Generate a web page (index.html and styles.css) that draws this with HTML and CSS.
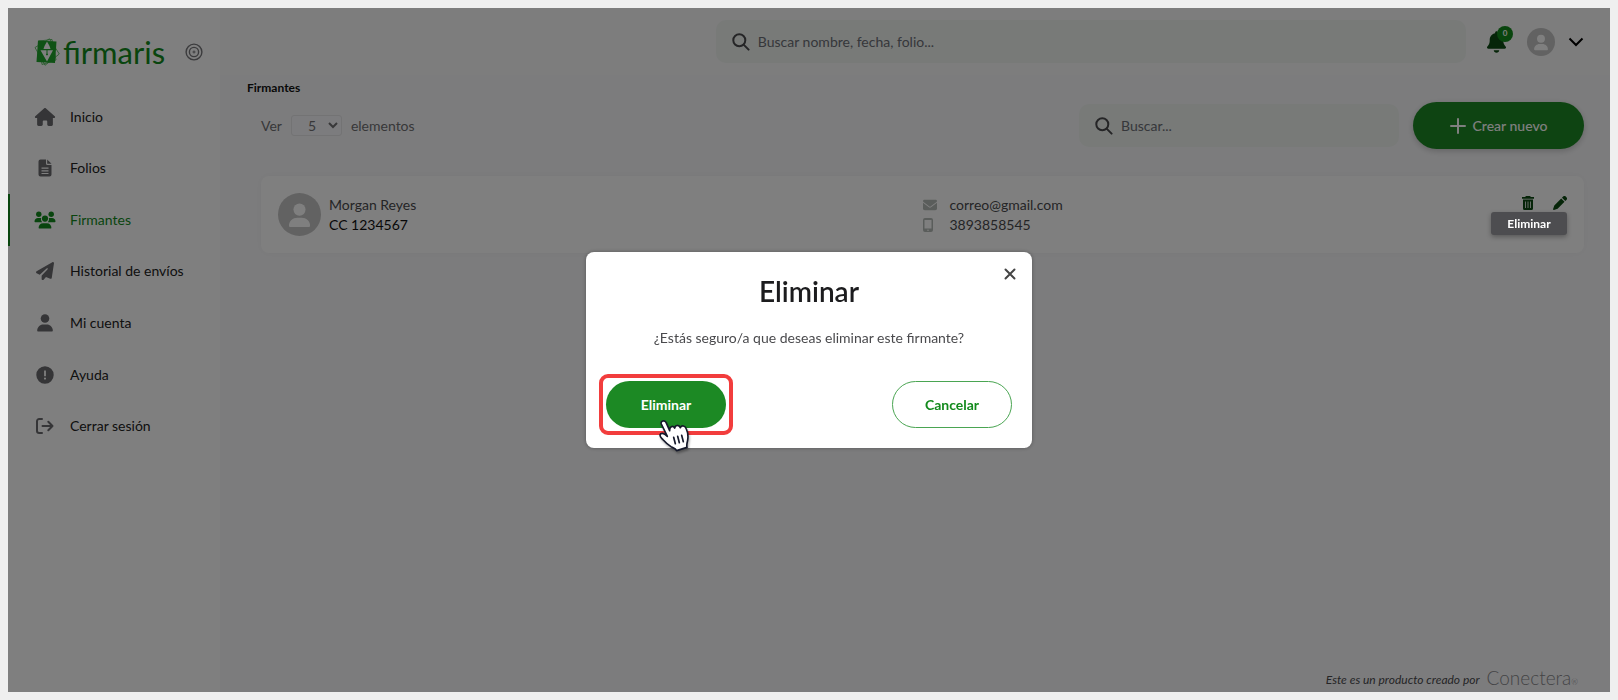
FILE: index.html
```
<!DOCTYPE html>
<html lang="es">
<head>
    <meta charset="UTF-8">
    <meta name="viewport" content="width=device-width, initial-scale=1.0">
    <title>Firmaris - Firmantes</title>
    <link rel="stylesheet" href="styles.css">
</head>
<body>

    <svg class="symbols" aria-hidden="true">
        <symbol id="icon-search" viewBox="0 0 18 18">
            <circle cx="7.3" cy="7.3" r="6" fill="none" stroke="currentColor" stroke-width="2"/>
            <path d="M11.6 11.6L16.6 16.6" stroke="currentColor" stroke-width="2" stroke-linecap="round"/>
        </symbol>
        <symbol id="icon-avatar" viewBox="0 0 44 44">
            <circle cx="22" cy="22" r="22" fill="#c4c4c4"/>
            <circle cx="22" cy="17" r="6.2" fill="#fff"/>
            <path d="M11.2 33.2c0-4.6 4-8 8.6-8h4.400c4.600 0 8.600 3.400 8.600 8 0 1-.6 1.600-1.600 1.600H12.800c-1 0-1.600-.6-1.600-1.600z" fill="#fff"/>
        </symbol>
    </svg>

    <div class="app">
        <aside class="sidebar">
            <div class="brand">
                <a class="logo" href="#">
                    <svg width="26" height="28" viewBox="0 0 26 28">
                        <path d="M1 9.500L15.500 .800 25.300 16 11 27.300z M5 3L18 1.500 22 22 8 26.500z" fill="none" stroke="#42b14b" stroke-width=".8" stroke-linejoin="round"/>
                        <path d="M4 2.500L22.500 3.500 21 25 2.500 24z" fill="#1fa52b"/>
                        <path d="M13 3.500C14.500 6 16 8.500 16.500 11H9.500C10 8.500 11.500 6 13 3.500z" fill="#fff"/>
                        <path d="M6.500 12.300h6v3.200a1 1 0 1 0 1 0v-3.200H19L13 23.500z" fill="#fff"/>
                    </svg>
                    <span class="logo-text">firmaris</span>
                </a>
                <button class="pin" type="button" aria-label="Fijar menú">
                    <svg width="18" height="18" viewBox="0 0 18 18" fill="none" stroke="currentColor">
                        <circle cx="9" cy="9" r="7.900" stroke-width="1.400"/>
                        <circle cx="9" cy="9" r="4.600" stroke-width="1.400"/>
                        <circle cx="9" cy="9" r="1" stroke-width="1"/>
                    </svg>
                </button>
            </div>

            <nav class="menu">
                <a href="#">
                    <svg viewBox="0 0 576 512"><path d="M575.8 255.5c0 18-15 32.1-32 32.1l-32 0 .7 160.2c0 2.7-.2 5.4-.5 8.1l0 16.2c0 22.1-17.900 40-40 40l-16 0c-1.100 0-2.200 0-3.300-.1c-1.400 .1-2.800 .1-4.200 .1L416 512l-24 0c-22.100 0-40-17.900-40-40l0-24 0-64c0-17.700-14.300-32-32-32l-64 0c-17.700 0-32 14.300-32 32l0 64 0 24c0 22.100-17.900 40-40 40l-24 0-31.900 0c-1.500 0-3-.1-4.500-.2c-1.200 .1-2.400 .2-3.600 .2l-16 0c-22.100 0-40-17.900-40-40l0-112c0-.9 0-1.900 .1-2.800l0-69.700-32 0c-18 0-32-14-32-32.100c0-9 3-17 10-24L266.400 8c7-7 15-8 22-8s15 2 21 7L564.800 231.500c8 7 12 15 11 24z"/></svg>
                    Inicio
                </a>
                <a href="#">
                    <svg viewBox="0 0 18 18">
                        <path fill-rule="evenodd" d="M4.500 .5H10V4.500a1.500 1.500 0 0 0 1.500 1.500H15.500V15.500a2 2 0 0 1-2 2h-9a2 2 0 0 1-2-2v-13a2 2 0 0 1 2-2z M5.500 8.500h7v1.200h-7z M5.500 11.200h7v1.200h-7z M5.500 13.900h7v1.200h-7z"/>
                        <path d="M11.200 .5L15.500 4.800H11.200z"/>
                    </svg>
                    Folios
                </a>
                <a class="active" href="#" aria-current="page">
                    <svg viewBox="0 0 22 18">
                        <circle cx="4.800" cy="3.200" r="2.700"/>
                        <circle cx="17.200" cy="3.200" r="2.700"/>
                        <circle cx="11" cy="7.600" r="3.100"/>
                        <path d="M.5 10.500c0-2 1.500-3.500 3.500-3.500h2.200c.3 0 .6 0 .9.1-.4 1.800.1 3 1.100 4.200H1.200c-.4 0-.7-.3-.7-.8z"/>
                        <path d="M21.500 10.500c0-2-1.500-3.500-3.500-3.500h-2.200c-.3 0-.6 0-.9.1.4 1.800-.1 3-1.100 4.200h7c.4 0 .7-.3.7-.8z"/>
                        <path d="M4.600 16.700c0-2.600 2-4.500 4.500-4.500h3.800c2.500 0 4.500 1.900 4.500 4.500 0 .5-.4.9-.9.9H5.500c-.5 0-.9-.4-.9-.9z"/>
                    </svg>
                    Firmantes
                </a>
                <a href="#">
                    <svg viewBox="0 0 512 512"><path d="M498.100 5.600c10.100 7 15.400 19.100 13.500 31.200l-64 416c-1.500 9.700-7.400 18.200-16 23s-18.900 5.400-28 1.600L284 427.700l-68.500 74.100c-8.900 9.700-22.900 12.900-35.200 8.100S160 493.200 160 480l0-83.600c0-4 1.500-7.800 4.200-10.800L331.800 202.800c5.800-6.300 5.600-16-.4-22s-15.700-6.400-22-.7L106 360.800 17.700 316.600C7.100 311.300 .3 300.700 0 288.900s5.900-22.800 16.100-28.700l448-256c10.700-6.100 23.900-5.500 34 1.400z"/></svg>
                    Historial de envíos
                </a>
                <a href="#">
                    <svg viewBox="0 0 18 18">
                        <circle cx="9" cy="4.500" r="4.300"/>
                        <path d="M1.200 16.600c0-3.300 2.800-6 6-6h3.600c3.200 0 6 2.700 6 6 0 .6-.4 1-1 1H2.200c-.6 0-1-.4-1-1z"/>
                    </svg>
                    Mi cuenta
                </a>
                <a href="#">
                    <svg viewBox="0 0 18 18">
                        <path fill-rule="evenodd" d="M9 .3a8.700 8.700 0 1 1 0 17.400A8.700 8.700 0 0 1 9 .3z M8.100 4.500v5.700h1.800V4.500z M9 11.500a1.100 1.100 0 1 0 0 2.200 1.100 1.100 0 0 0 0-2.200z"/>
                    </svg>
                    Ayuda
                </a>
                <a href="#">
                    <svg viewBox="0 0 18 18">
                        <path d="M6 2H3.200A2.200 2.200 0 0 0 1 4.200v9.600A2.200 2.200 0 0 0 3.200 16H6M6.500 9H16.500M12.300 4.800L16.500 9l-4.200 4.200" fill="none" stroke="currentColor" stroke-width="2" stroke-linecap="round" stroke-linejoin="round"/>
                    </svg>
                    Cerrar sesión
                </a>
            </nav>
        </aside>

        <div class="page">
            <header class="topbar">
                <div class="search search-global">
                    <svg width="18" height="18"><use href="#icon-search"/></svg>
                    <input type="text" aria-label="Buscar nombre, fecha o folio" placeholder="Buscar nombre, fecha, folio...">
                </div>
                <button class="bell" type="button" aria-label="Notificaciones">
                    <svg width="19" height="22" viewBox="0 0 448 512"><path fill="currentColor" d="M224 0c-17.700 0-32 14.300-32 32l0 19.200C119 66 64 130.600 64 208l0 18.800c0 47-17.300 92.400-48.500 127.600l-7.400 8.300c-8.400 9.400-10.400 22.900-5.300 34.400S19.400 416 32 416l384 0c12.600 0 24-7.400 29.200-18.900s3.100-25-5.300-34.400l-7.400-8.300C401.300 319.200 384 273.900 384 226.800l0-18.800c0-77.400-55-142-128-156.800L256 32c0-17.700-14.300-32-32-32zm45.300 493.300c12-12 18.700-28.300 18.700-45.300l-64 0-64 0c0 17 6.700 33.300 18.700 45.300s28.300 18.700 45.300 18.700s33.300-6.700 45.300-18.700z"/></svg>
                    <span class="badge">0</span>
                </button>
                <button class="account" type="button" aria-label="Cuenta">
                    <svg width="28" height="28"><use href="#icon-avatar"/></svg>
                    <svg width="16" height="10" viewBox="0 0 16 10"><path d="M1.500 1.500L8 8l6.500-6.500" fill="none" stroke="#000" stroke-width="2"/></svg>
                </button>
            </header>

            <main class="content">
                <h1>Firmantes</h1>

                <div class="toolbar">
                    <div class="page-size">
                        <label for="pageSize">Ver</label>
                        <select id="pageSize">
                            <option>5</option>
                            <option>10</option>
                            <option>25</option>
                        </select>
                        <span>elementos</span>
                    </div>
                    <div class="search search-list">
                        <svg width="18" height="18"><use href="#icon-search"/></svg>
                        <input type="text" aria-label="Buscar" placeholder="Buscar...">
                    </div>
                    <button class="btn btn-create" type="button">
                        <svg width="16" height="16" viewBox="0 0 16 16"><path d="M8 1v14M1 8h14" stroke="currentColor" stroke-width="2" stroke-linecap="round"/></svg>
                        Crear nuevo
                    </button>
                </div>

                <article class="signer">
                    <div class="person">
                        <svg width="43" height="43"><use href="#icon-avatar"/></svg>
                        <div>
                            <p>Morgan Reyes</p>
                            <p class="document">CC 1234567</p>
                        </div>
                    </div>
                    <div class="contact">
                        <p>
                            <svg width="14" height="14" viewBox="0 0 512 512"><path fill="currentColor" d="M48 64C21.500 64 0 85.500 0 112c0 15.100 7.100 29.300 19.200 38.400L236.800 313.600c11.400 8.500 27 8.500 38.400 0L492.800 150.400c12.100-9.100 19.200-23.300 19.200-38.400c0-26.500-21.500-48-48-48L48 64zM0 176L0 384c0 35.300 28.700 64 64 64l384 0c35.300 0 64-28.700 64-64l0-208L294.400 339.200c-22.800 17.100-54 17.100-76.800 0L0 176z"/></svg>
                            correo@gmail.com
                        </p>
                        <p>
                            <svg width="14" height="14" viewBox="0 0 14 14"><path fill="currentColor" fill-rule="evenodd" d="M2 0h6a2 2 0 0 1 2 2v10a2 2 0 0 1-2 2H2a2 2 0 0 1-2-2V2a2 2 0 0 1 2-2z M1.500 2v8.500h7V2z M5 11.400a.8.8 0 1 0 0 1.600.8.8 0 0 0 0-1.600z"/></svg>
                            3893858545
                        </p>
                    </div>
                    <div class="actions">
                        <button type="button" aria-label="Eliminar firmante">
                            <svg width="14" height="14" viewBox="0 0 14 14"><path fill="currentColor" fill-rule="evenodd" d="M4.800 0h4.400l.5 1H13v1.800H1V1h3.300z M2 3.600h10v8.900a1.500 1.500 0 0 1-1.500 1.500h-7A1.500 1.500 0 0 1 2 12.500z M4.200 5.500v6.500h.8V5.500z M6.600 5.500v6.500h.8V5.500z M9 5.500v6.500h.8V5.500z"/></svg>
                        </button>
                        <button type="button" aria-label="Editar firmante">
                            <svg width="14" height="14" viewBox="0 0 14 14"><path fill="currentColor" d="M8.200 2.500l3.300 3.300L4.600 12.700 .900 13.900c-.5.1-.9-.3-.8-.8L1.300 9.400z M9 1.700L10.100.600a1.900 1.900 0 0 1 2.700 0l.6.600a1.900 1.900 0 0 1 0 2.700L12.300 5z"/></svg>
                        </button>
                        <span class="tooltip" role="tooltip">Eliminar</span>
                    </div>
                </article>
            </main>

            <footer class="footer">
                <em>Este es un producto creado por</em>
                <span class="conectera">Conectera<small>®</small></span>
            </footer>
        </div>

        <div class="overlay">
            <section class="modal" role="dialog" aria-modal="true" aria-labelledby="modalTitle">
                <button class="close" type="button" aria-label="Cerrar">
                    <svg width="12" height="12" viewBox="0 0 12 12"><path d="M1.500 1.500l9 9M10.500 1.500l-9 9" stroke="currentColor" stroke-width="2" stroke-linecap="round"/></svg>
                </button>
                <h2 id="modalTitle">Eliminar</h2>
                <p>¿Estás seguro/a que deseas eliminar este firmante?</p>
                <div class="modal-buttons">
                    <div class="highlight">
                        <button class="btn btn-primary" type="button">Eliminar</button>
                        <svg class="pointer" width="30" height="32" viewBox="0 0 90 96">
                            <path d="M7 12C4 3 16-1 21 7L32 32C31 20 41 15 47 24C49 14 60 14 64 23C68 14 79 17 82 27C87 38 88 48 86 60C85 68 82 72 84 82L53 92C50 86 44 84 36 80C28 75 20 68 13 60C8 54 3 52 3 45C5 38 14 38 25 49z" fill="#fff" stroke="#14182a" stroke-width="5" stroke-linejoin="round"/>
                            <path d="M44 52l5 19M56 49l5 19M68 46l5 19" stroke="#14182a" stroke-width="5" stroke-linecap="round"/>
                        </svg>
                    </div>
                    <button class="btn btn-outline" type="button">Cancelar</button>
                </div>
            </section>
        </div>
    </div>

</body>
</html>
```
FILE: styles.css
```
* {
    box-sizing: border-box;
}

body {
    font-family: Lato, "Open Sans", sans-serif;
    font-size: 14px;
    line-height: 20px;
    color: #4a4a4d;
    background-color: #efefef;
    margin: 0;
    padding: 8px;
}

h1, h2, p {
    margin: 0;
}

button, input, select {
    font: inherit;
    color: inherit;
}

button {
    background: none;
    border: 0;
    padding: 0;
    cursor: pointer;
}

svg {
    display: block;
    flex: none;
}

.symbols {
    position: absolute;
    width: 0;
    height: 0;
}

.app {
    display: flex;
    min-height: calc(100vh - 16px);
    background-color: #f9f9fb;
}

/* Sidebar */
.sidebar {
    width: 212px;
    flex: none;
    background-color: #fff;
}

.brand {
    display: flex;
    align-items: center;
    justify-content: space-between;
    height: 83px;
    padding: 4px 17px 0 26px;
}

.logo {
    display: flex;
    align-items: center;
    gap: 3px;
    text-decoration: none;
}

.logo-text {
    font-size: 31px;
    line-height: 36px;
    color: #128a1c;
}

.pin {
    color: #77777a;
}

.menu {
    display: grid;
    grid-auto-rows: 1fr;
    height: 361px;
}

.menu a {
    display: flex;
    align-items: center;
    gap: 14px;
    padding-left: 24px;
    border-left: 2px solid transparent;
    color: #222;
    text-decoration: none;
}

.menu svg {
    width: 22px;
    height: 18px;
    color: #6a6a6e;
    fill: currentColor;
}

.menu .active {
    border-left-color: #128a1c;
    color: #128a1c;
}

.menu .active svg {
    color: #128a1c;
}

/* Header */
.page {
    flex: 1;
    display: flex;
    flex-direction: column;
    min-width: 0;
}

.topbar {
    display: flex;
    align-items: center;
    justify-content: flex-end;
    height: 67px;
    padding-right: 26px;
    background-color: #fafafa;
}

.search {
    display: flex;
    align-items: center;
    gap: 8px;
    height: 43px;
    padding: 0 16px;
    border-radius: 10px;
    background-color: #f0f4f1;
    color: #4a4a4d;
}

.search input {
    flex: 1;
    min-width: 0;
    border: 0;
    padding: 0;
    outline: none;
    background: none;
}

.search input::placeholder {
    color: #6c6f76;
    opacity: 1;
}

.search-global {
    width: 55%;
}

.bell {
    position: relative;
    margin-left: 21px;
    color: #0c4a12;
}

.badge {
    position: absolute;
    top: -5px;
    right: -7px;
    width: 16px;
    height: 16px;
    border-radius: 50%;
    background-color: #128a1c;
    color: #fff;
    font-size: 8px;
    font-weight: bold;
    line-height: 15px;
}

.account {
    display: flex;
    align-items: center;
    gap: 13px;
    margin-left: 21px;
}

/* Content */
.content {
    padding: 5px 26px 0 27px;
}

h1 {
    color: #111;
    font-size: 12px;
    line-height: 16px;
}

.toolbar {
    display: flex;
    align-items: center;
    margin-top: 6px;
    padding-left: 14px;
}

.page-size {
    display: flex;
    align-items: center;
    gap: 9px;
    margin-right: auto;
    color: #707073;
}

.page-size select {
    width: 51px;
    height: 21px;
    padding: 0 0 0 12px;
    border: 1px solid #e6e6e8;
    border-radius: 3px;
    background-color: #f9f9fc;
}

.search-list {
    width: 320px;
    margin-right: 14px;
}

.btn {
    height: 47px;
    border-radius: 24px;
    font-weight: bold;
}

.btn-create {
    display: flex;
    align-items: center;
    justify-content: center;
    gap: 7px;
    width: 171px;
    background-color: #1c8924;
    box-shadow: 0 2px 6px rgba(0, 0, 0, 0.2);
    color: #fff;
    font-weight: 500;
}

.signer {
    display: grid;
    grid-template-columns: 50% 1fr auto;
    align-items: center;
    margin: 27px 0 0 14px;
    padding: 17px;
    border-radius: 8px;
    background-color: #fff;
    box-shadow: 0 0 8px rgba(0, 0, 0, 0.04);
}

.person {
    display: flex;
    align-items: center;
    gap: 8px;
}

.document {
    color: #111;
}

.contact p {
    display: flex;
    align-items: center;
    gap: 13px;
}

.contact svg {
    color: #b4bab6;
}

.actions {
    position: relative;
    align-self: start;
    display: flex;
    gap: 18px;
    padding-top: 3px;
    color: #0c4a12;
}

.tooltip {
    position: absolute;
    top: 19px;
    right: 0;
    z-index: 20;
    width: 76px;
    border-radius: 3px;
    background-color: #4d4d50;
    box-shadow: 0 2px 5px rgba(0, 0, 0, 0.3);
    color: #fff;
    font-size: 12px;
    font-weight: bold;
    line-height: 23px;
    text-align: center;
}

.footer {
    display: flex;
    align-items: center;
    justify-content: flex-end;
    gap: 7px;
    margin-top: auto;
    padding-right: 32px;
    font-size: 12px;
}

.conectera {
    color: #88888b;
    font-size: 19px;
    font-weight: 300;
}

.conectera small {
    font-size: 8px;
}

/* Modal */
.overlay {
    position: fixed;
    inset: 8px;
    z-index: 10;
    display: flex;
    align-items: center;
    justify-content: center;
    background-color: rgba(0, 0, 0, 0.5);
}

.modal {
    position: relative;
    width: 446px;
    padding: 20px;
    border-radius: 8px;
    background-color: #fff;
    box-shadow: 0 0 4px rgba(0, 0, 0, 0.3);
    text-align: center;
}

.modal h2 {
    color: #1c1c1e;
    font-size: 28px;
    font-weight: 600;
    line-height: 38px;
}

.modal p {
    margin-top: 18px;
}

.close {
    position: absolute;
    top: 16px;
    right: 16px;
    color: #444;
}

.modal-buttons {
    display: flex;
    justify-content: space-between;
    margin-top: 33px;
}

.modal-buttons .btn {
    width: 120px;
}

.highlight {
    position: relative;
}

/* Red frame around the confirm button */
.highlight::before {
    content: "";
    position: absolute;
    inset: -7px;
    border: 4px solid #f23d3d;
    border-radius: 9px;
}

.btn-primary {
    position: relative;
    background-color: #1c8924;
    color: #fff;
}

.pointer {
    position: absolute;
    top: 39px;
    left: 53px;
    overflow: visible;
    filter: drop-shadow(1px 2px 1px rgba(0, 0, 0, 0.3));
}

.btn-outline {
    border: 1px solid #4aa552;
    color: #128a1c;
}
```
